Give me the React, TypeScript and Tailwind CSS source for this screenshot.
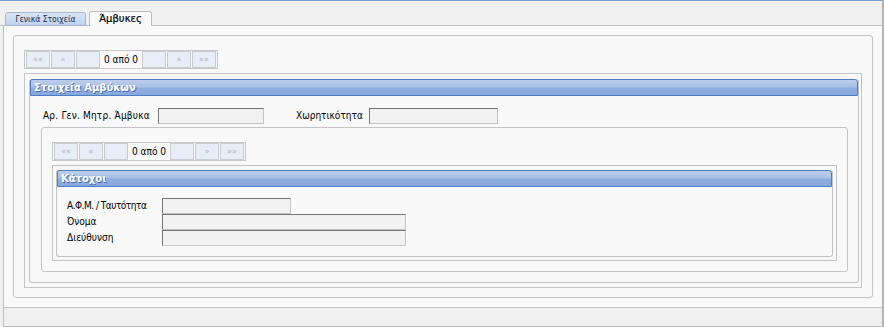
import React from "react";

const cond = "font-['DejaVu_Sans_Condensed','DejaVu_Sans',sans-serif] [font-stretch:condensed]";

function PagerBtn({ label }: { label?: string }) {
  return (
    <div className="w-[24px] h-[17px] bg-[#e8eef7] border border-[#c9ccd1] flex items-center justify-center text-[8px] leading-none text-[#b0b2b8]">
      {label}
    </div>
  );
}

function Pager() {
  return (
    <div className="flex items-center gap-px px-px border border-[#c8c8c8] w-fit">
      <PagerBtn label="««" />
      <PagerBtn label="«" />
      <PagerBtn />
      <div className={`w-[40px] text-center text-[10px] leading-none text-black whitespace-nowrap ${cond}`}>0 από 0</div>
      <PagerBtn />
      <PagerBtn label="»" />
      <PagerBtn label="»»" />
    </div>
  );
}

function HeaderBar({ title }: { title: string }) {
  return (
    <div className="h-[17px] shrink-0 rounded-tr-[3px] rounded-tl-[2px] border border-[#4f7dc2] bg-[linear-gradient(#bccdea,#a9c0e6_45%,#8eaee0_55%,#87a8de)] flex items-center pl-[3px]">
      <span className="text-[10px] font-bold text-white leading-none whitespace-nowrap [text-shadow:1px_1px_0_#4a6fa8]">{title}</span>
    </div>
  );
}

function Input({ w }: { w: string }) {
  return (
    <div
      className={`${w} shrink-0 h-[16px] bg-[#f2f2f2] border border-t-[#747474] border-l-[#747474] border-b-[#c4c4c4] border-r-[#c4c4c4]`}
    />
  );
}

function Label({ w, children, extra = "" }: { w: string; children: React.ReactNode; extra?: string }) {
  return (
    <span className={`${w} ${extra} shrink-0 whitespace-nowrap text-[10px] leading-none ${cond}`}>{children}</span>
  );
}

export default function App() {
  return (
    <div className="w-[884px] h-[327px] bg-[#f0f0f0] border-r-2 border-[#b4b4b4] flex flex-col overflow-hidden font-['DejaVu_Sans',sans-serif] text-black">
      <div className="h-px bg-[#74a0d8]" />
      {/* tab strip */}
      <div className="h-[25px] border-b border-[#c2c2c2] flex items-end pl-[5px] gap-[3px]">
        <div className="w-[81px] h-[14px] -mb-px border border-[#a7b7cf] rounded-t-[3px] bg-[linear-gradient(#d9e6f6,#bfd3ee)] flex items-center justify-center">
          <span className={`text-[8.5px] leading-none text-[#1b2a4a] whitespace-nowrap ${cond}`}>Γενικά Στοιχεία</span>
        </div>
        <div className="w-[63px] h-[15px] -mb-px border border-b-0 border-[#bdbdbd] rounded-t-[3px] bg-[#f9f9f9] flex items-center justify-center">
          <span className="text-[10px] leading-none text-black whitespace-nowrap [-webkit-text-stroke:0.2px_black]">Άμβυκες</span>
        </div>
      </div>
      {/* body */}
      <div className="ml-[3px] flex-1 flex flex-col border-l border-b border-[#bdbdbd]">
        <div className="h-[281px] bg-[#f9f9f9] p-[9px]">
          {/* outer panel */}
          <div className="h-full border border-[#c4c4c4] rounded-[3px] pt-[14px] pl-[10px] pr-[10px] pb-[9px] flex flex-col">
            <Pager />
            <div className="mt-[4px] flex-1 border border-[#c4c4c4] pt-[5px] pl-[4px] pr-[2px] pb-[4px] flex">
              <div className="flex-1 border border-t-0 border-[#c4c4c4] rounded-[3px] flex flex-col">
                <HeaderBar title="Στοιχεία Αμβύκων" />
                <div className="flex items-center mt-[12px] pl-[13px]">
                  <Label w="w-[115px]" extra="tracking-[0.2px]">Αρ. Γεν. Μητρ. Άμβυκα</Label>
                  <Input w="w-[106px]" />
                  <Label w="w-[73px]" extra="ml-[32px]">Χωρητικότητα</Label>
                  <Input w="w-[129px]" />
                </div>
                {/* inner subpanel */}
                <div className="mt-[3px] ml-[11px] mr-[10px] mb-[10px] flex-1 border border-[#c4c4c4] rounded-[3px] pt-[14px] pl-[10px] pr-[10px] pb-[10px] flex flex-col">
                  <Pager />
                  <div className="mt-[4px] flex-1 border border-[#c4c4c4] pt-[4px] px-[3px] pb-[3px] flex">
                    <div className="flex-1 border border-t-0 border-[#c4c4c4] rounded-[3px] flex flex-col">
                      <HeaderBar title="Κάτοχοι" />
                      <div className="mt-[11px] pl-[10px] flex flex-col">
                        <div className="flex items-center">
                          <Label w="w-[95px]" extra="tracking-[-0.5px]">Α.Φ.Μ. / Ταυτότητα</Label>
                          <Input w="w-[129px]" />
                        </div>
                        <div className="flex items-center">
                          <Label w="w-[95px]">Όνομα</Label>
                          <Input w="w-[244px]" />
                        </div>
                        <div className="flex items-center">
                          <Label w="w-[95px]">Διεύθυνση</Label>
                          <Input w="w-[244px]" />
                        </div>
                      </div>
                    </div>
                  </div>
                </div>
              </div>
            </div>
          </div>
        </div>
        <div className="flex-1 border-t border-[#c2c2c2] bg-[#f0f0f0]" />
      </div>
    </div>
  );
}
